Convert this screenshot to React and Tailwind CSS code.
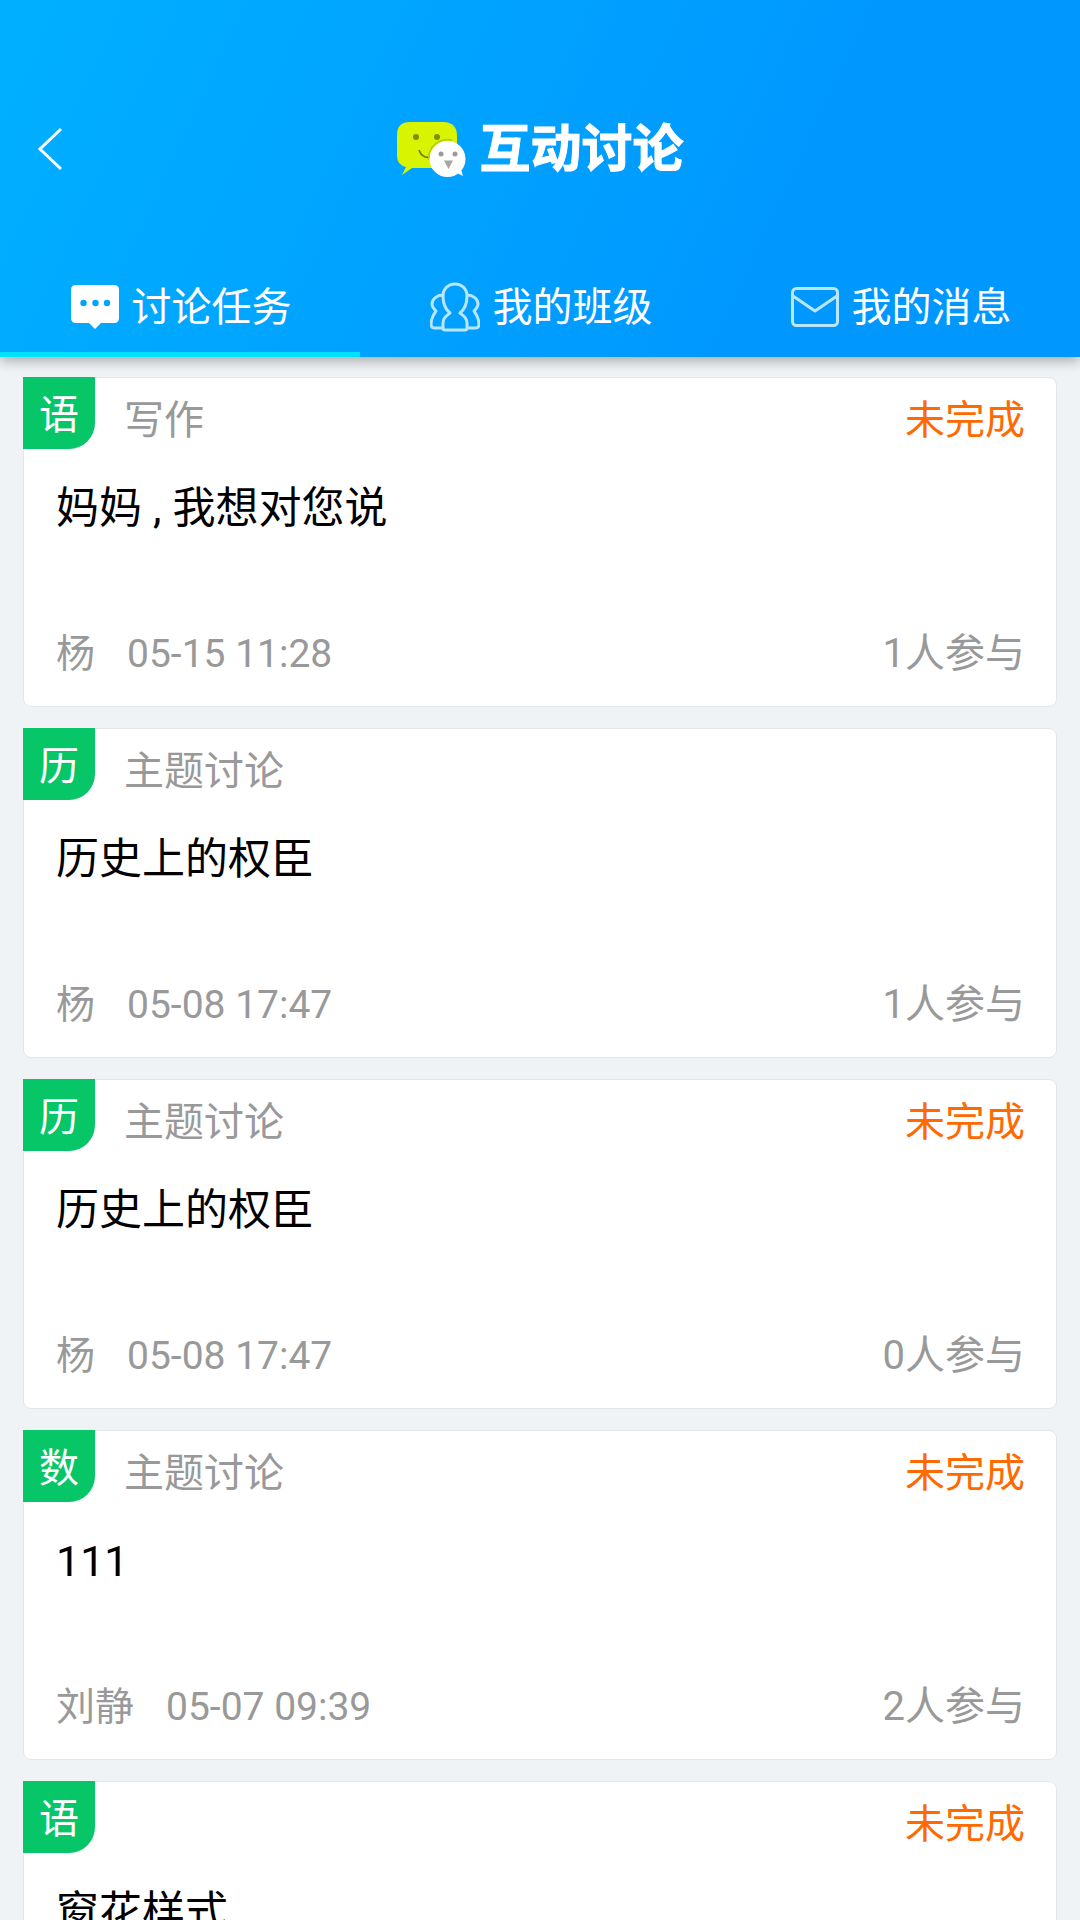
const FONT = "font-['Roboto','Noto_Sans_CJK_SC',sans-serif]";

const tasks = [
  { subject: "语", kind: "写作", open: true, title: ["妈妈", "我想对您说"], author: "杨", time: "05-15 11:28", count: 1 },
  { subject: "历", kind: "主题讨论", open: false, title: ["历史上的权臣"], author: "杨", time: "05-08 17:47", count: 1 },
  { subject: "历", kind: "主题讨论", open: true, title: ["历史上的权臣"], author: "杨", time: "05-08 17:47", count: 0 },
  { subject: "数", kind: "主题讨论", open: true, title: ["111"], author: "刘静", time: "05-07 09:39", count: 2 },
  { subject: "语", kind: "", open: true, title: ["窗花样式"], author: "", time: "", count: null },
];

function BackIcon() {
  return (
    <svg width="26" height="44" viewBox="0 0 26 44" fill="none" className="block">
      <path d="M24 2 L3 22 L24 42" stroke="#fff" strokeWidth="3" />
    </svg>
  );
}

function LogoIcon() {
  return (
    <svg width="72" height="60" viewBox="0 0 72 60" className="block">
      <path d="M14 2 H47 Q61 2 61 16 V38 Q61 48 50 48 H16 L6 55 L10 47 Q1 45 1 36 V15 Q1 2 14 2 Z" fill="#d8f400" />
      <circle cx="20" cy="17" r="3" fill="#7f8f00" />
      <circle cx="41" cy="17" r="3" fill="#7f8f00" />
      <path d="M23 30 Q26 39 36 37" stroke="#6d7a00" strokeWidth="1.6" fill="none" />
      <path d="M32.500 40 A19.500 19.500 0 0 1 56 20" stroke="#b4c800" strokeWidth="1.600" fill="none" />
      <circle cx="51.500" cy="39" r="18" fill="#fff" />
      <path d="M59 52 L67 56 L64 46 Z" fill="#fff" />
      <circle cx="45" cy="34" r="2.500" fill="#9a9a9a" />
      <circle cx="59" cy="34" r="2.500" fill="#9a9a9a" />
      <path d="M48 40.500 H57 L52.500 49 Z" fill="#a6a6a6" />
    </svg>
  );
}

function ChatIcon() {
  return (
    <svg width="48" height="46" viewBox="0 0 48 46" className="block">
      <path d="M5 1 H43 Q48 1 48 6 V34 Q48 39 43 39 H30 L24 45 L18 39 H5 Q0 39 0 34 V6 Q0 1 5 1 Z" fill="#fff" />
      <circle cx="12.500" cy="19" r="3.200" fill="#00a4ff" />
      <circle cx="24.500" cy="19" r="3.200" fill="#00a4ff" />
      <circle cx="36" cy="19" r="3.200" fill="#00a4ff" />
    </svg>
  );
}

function PeopleIcon() {
  return (
    <svg width="50" height="50" viewBox="0 0 50 50" fill="none" className="block" stroke="#b9e6ff" strokeWidth="3" strokeLinejoin="round">
      <path d="M13 46 V41 C13 35 18 33 20 31 C15 27 13 21 13 14 C13 7 18 2 25 2 C32 2 37 7 37 14 C37 21 35 27 30 31 C32 33 37 35 37 41 V46 C37 48 36 48 35 48 H15 C14 48 13 48 13 46 Z" />
      <path d="M13 13 C7 13 2 17 2 22 C2 25 4 27 6 29 C4 32 1 36 1 42 Q1 46 4 46 H12" />
      <path d="M37 13 C43 13 48 17 48 22 C48 25 46 27 44 29 C46 32 49 36 49 42 Q49 46 46 46 H38" />
    </svg>
  );
}

function MailIcon() {
  return (
    <svg width="48" height="40" viewBox="0 0 48 40" fill="none" className="block" stroke="#b9e6ff" strokeWidth="3">
      <rect x="1.500" y="1.500" width="45" height="37" rx="4" />
      <path d="M2 9 L24 24 L46 9" strokeLinejoin="round" />
    </svg>
  );
}

function Tab({ icon, label, active }) {
  return (
    <div className={`flex flex-1 items-center justify-center gap-[13px] border-b-[5px] pl-[2px] ${active ? "border-[#00e0ff]" : "border-transparent"}`}>
      {icon}
      <span className="pt-[2px] text-[40px] leading-none text-white">{label}</span>
    </div>
  );
}

function TaskCard({ task }) {
  return (
    <article className="relative h-[330px] shrink-0 rounded-[8px] border border-[#e2e6e9] bg-white">
      <div className="absolute -left-px -top-px flex h-[72px] w-[72px] items-center justify-center rounded-br-[26px] bg-[#06c668] pt-[6px] text-[40px] leading-none text-white">
        {task.subject}
      </div>
      <div className="flex h-full flex-col pl-[32px] pr-[31px]">
        <div className="flex h-[84px] shrink-0 items-center justify-between pl-[68px] pt-[1px] text-[40px] leading-none">
          <span className="text-[#999999]">{task.kind}</span>
          {task.open && <span className="text-[#ff6a00]">未完成</span>}
        </div>
        <div className="flex h-[92px] shrink-0 items-center text-[43px] leading-none text-black">
          <span>
            {task.title[0]}
            {task.title[1] && (
              <>
                <span className="px-[11px]">,</span>
                {task.title[1]}
              </>
            )}
          </span>
        </div>
        <div className="flex h-[125px] shrink-0 items-end">
          <div className="flex h-[50px] w-full items-center justify-between text-[40px] leading-none text-[#999999]">
            <div className="flex items-center gap-[32px]">
              <span className="text-[39px]">{task.author}</span>
              <span className="text-[39px]">{task.time}</span>
            </div>
            {task.count !== null && <span>{task.count}人参与</span>}
          </div>
        </div>
      </div>
    </article>
  );
}

export default function App() {
  return (
    <div className={`flex h-[1920px] w-[1080px] flex-col overflow-hidden bg-[#eff3f6] ${FONT}`}>
      <header className="relative z-10 h-[357px] shrink-0 bg-[linear-gradient(115deg,#00b0ff,#0097ff_75%)] shadow-[0_4px_12px_rgba(0,0,0,0.3)]">
        <div className="relative flex h-[262px] items-center justify-center pt-[37px]">
          <div className="absolute left-[37px] top-[127px]">
            <BackIcon />
          </div>
          <div className="flex items-center gap-[11px]">
            <LogoIcon />
            <h1 className="text-[51px] font-bold leading-none text-white [-webkit-text-stroke:1px_white]">互动讨论</h1>
          </div>
        </div>
        <nav className="flex h-[95px]">
          <Tab icon={<ChatIcon />} label="讨论任务" active />
          <Tab icon={<PeopleIcon />} label="我的班级" />
          <Tab icon={<MailIcon />} label="我的消息" />
        </nav>
      </header>
      <main className="flex flex-col gap-[21px] pl-[23px] pr-[23px] pt-[20px]">
        {tasks.map((task, i) => (
          <TaskCard key={i} task={task} />
        ))}
      </main>
    </div>
  );
}
